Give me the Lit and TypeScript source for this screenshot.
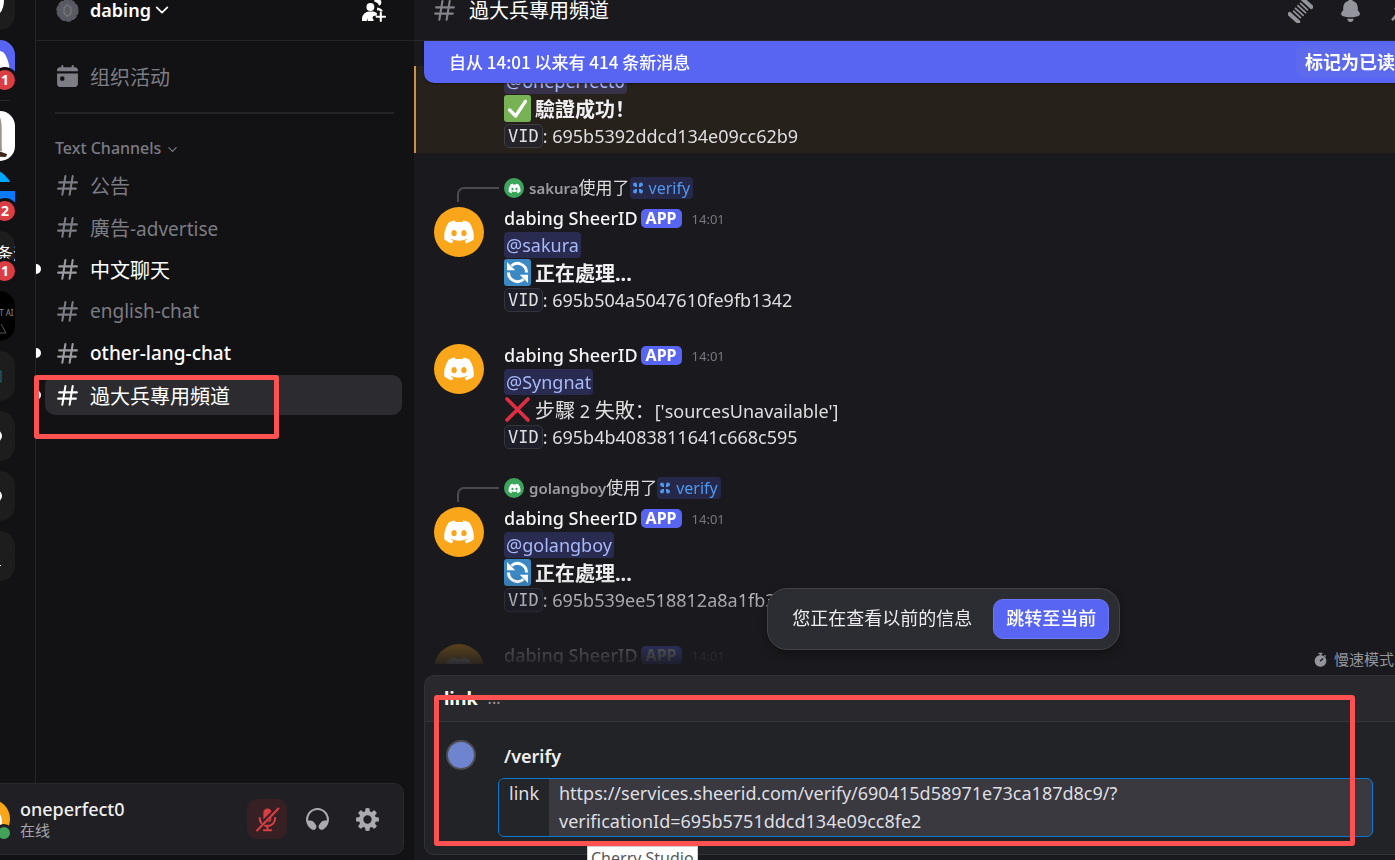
import { LitElement, html, svg, css, nothing, TemplateResult } from "lit";
import { customElement, property } from "lit/decorators.js";

const HASH =
  "M10.99 3.16A1 1 0 1 0 9 2.84L8.15 8H4a1 1 0 0 0 0 2h3.82l-.67 4H3a1 1 0 1 0 0 2h3.82l-.8 4.84a1 1 0 0 0 1.97.32L8.85 16h4.97l-.8 4.84a1 1 0 0 0 1.97.32l.86-5.16H20a1 1 0 1 0 0-2h-3.82l.67-4H21a1 1 0 1 0 0-2h-3.82l.8-4.84a1 1 0 1 0-1.97-.32L15.15 8h-4.97l.8-4.84ZM14.15 14l.67-4H9.85l-.67 4h4.97Z";
const CLYDE =
  "M19.73 4.87a18.2 18.2 0 0 0-4.6-1.44c-.21.4-.4.8-.58 1.21-1.69-.25-3.4-.25-5.1 0-.18-.41-.37-.82-.59-1.2-1.6.27-3.14.75-4.6 1.43A19.04 19.04 0 0 0 .96 17.7a18.43 18.43 0 0 0 5.63 2.87c.46-.62.86-1.28 1.2-1.98-.65-.25-1.29-.55-1.9-.92.17-.12.32-.24.47-.37 3.58 1.7 7.7 1.7 11.28 0l.46.37c-.6.36-1.25.67-1.9.92.35.7.75 1.35 1.2 1.98 2.03-.63 3.94-1.6 5.64-2.87.47-4.87-.78-9.09-3.3-12.83ZM8.3 15.12c-1.1 0-2-1.02-2-2.27 0-1.24.88-2.26 2-2.26s2.02 1.02 2 2.26c0 1.25-.89 2.27-2 2.27Zm7.4 0c-1.1 0-2-1.02-2-2.27 0-1.24.88-2.26 2-2.26s2.02 1.02 2 2.26c0 1.25-.88 2.27-2 2.27Z";
const GEAR =
  "M10.56 1.1c-.46.05-.7.53-.64.98.18 1.16-.19 2.2-.98 2.53-.8.33-1.79-.15-2.49-1.1-.27-.36-.78-.52-1.14-.24-.77.59-1.45 1.27-2.04 2.04-.28.36-.12.87.24 1.14.96.7 1.43 1.7 1.1 2.49-.33.8-1.37 1.16-2.53.98-.45-.07-.93.18-.99.64a11.1 11.1 0 0 0 0 2.88c.06.46.54.7.99.64 1.16-.18 2.2.19 2.53.98.33.8-.14 1.79-1.1 2.49-.36.27-.52.78-.24 1.14.59.77 1.27 1.45 2.04 2.04.36.28.87.12 1.14-.24.7-.95 1.7-1.43 2.49-1.1.8.33 1.16 1.37.98 2.53-.07.45.18.93.64.99a11.1 11.1 0 0 0 2.88 0c.46-.06.7-.54.64-.99-.18-1.16.19-2.2.98-2.53.8-.33 1.79.14 2.49 1.1.27.36.78.52 1.14.24.77-.59 1.45-1.27 2.04-2.04.28-.36.12-.87-.24-1.14-.96-.7-1.43-1.7-1.1-2.49.33-.8 1.37-1.16 2.53-.98.45.07.93-.18.99-.64a11.1 11.1 0 0 0 0-2.88c-.06-.46-.54-.7-.99-.64-1.16.18-2.2-.19-2.53-.98-.33-.8.14-1.79 1.1-2.49.36-.27.52-.78.24-1.14a11.07 11.07 0 0 0-2.04-2.04c-.36-.28-.87-.12-1.14.24-.7.96-1.7 1.43-2.49 1.1-.8-.33-1.16-1.37-.98-2.53.07-.45-.18-.93-.64-.99a11.1 11.1 0 0 0-2.88 0ZM16 12a4 4 0 1 1-8 0 4 4 0 0 1 8 0Z";
const BELL =
  "M9.7 2.89c.18-.07.32-.24.37-.43a2 2 0 0 1 3.86 0c.05.2.19.36.38.43A7 7 0 0 1 19 9.5v2.09c0 .12.05.24.13.33l1.1 1.22a3 3 0 0 1 .77 2.01v.28c0 .67-.34 1.29-.95 1.56-1.31.6-4 1.51-8.05 1.51-4.05 0-6.74-.91-8.05-1.5-.61-.28-.95-.9-.95-1.57v-.28a3 3 0 0 1 .77-2l1.1-1.23a.5.5 0 0 0 .13-.33V9.5a7 7 0 0 1 4.7-6.61ZM9.18 19.84A.16.16 0 0 0 9 20a3 3 0 1 0 6 0c0-.1-.09-.17-.18-.16a24.86 24.86 0 0 1-5.64 0Z";
const HEADPHONES =
  "M12 3a9 9 0 0 0-8.95 10h1.87a5 5 0 0 1 4.1 2.13l1.37 1.97a3.1 3.1 0 0 1-.17 3.78 2.85 2.85 0 0 1-3.55.74 11 11 0 1 1 10.66 0c-1.27.71-2.73.23-3.55-.74a3.1 3.1 0 0 1-.17-3.78l1.38-1.97a5 5 0 0 1 4.1-2.13h1.86A9 9 0 0 0 12 3Z";

const icon = (body: TemplateResult, cls = "ico") =>
  html`<svg class=${cls} viewBox="0 0 24 24" fill="currentColor" aria-hidden="true">${body}</svg>`;

const hash = () => icon(svg`<path fill-rule="evenodd" d=${HASH}></path>`);
const clyde = () => icon(svg`<path d=${CLYDE}></path>`, "clyde");
const gear = () => icon(svg`<path fill-rule="evenodd" d=${GEAR}></path>`);
const bell = () => icon(svg`<path d=${BELL}></path>`);
const headphones = () => icon(svg`<path d=${HEADPHONES}></path>`);
const chevron = () =>
  icon(svg`<path d="M4 8l8 8 8-8" fill="none" stroke="currentColor" stroke-width="2.6" stroke-linecap="round" stroke-linejoin="round"></path>`, "chevron");
const calendar = () =>
  icon(svg`<path d="M7 1a1 1 0 0 1 1 1v1h8V2a1 1 0 1 1 2 0v1h1a3 3 0 0 1 3 3v1H2V6a3 3 0 0 1 3-3h1V2a1 1 0 0 1 1-1Z"></path><path fill-rule="evenodd" d="M2 9h20v10a3 3 0 0 1-3 3H5a3 3 0 0 1-3-3V9Zm4 3a1 1 0 0 0-1 1v2a1 1 0 0 0 1 1h2a1 1 0 0 0 1-1v-2a1 1 0 0 0-1-1H6Z"></path>`);
const invite = () =>
  icon(svg`<circle cx="9" cy="8.600" r="3.800"></circle><path d="M1 22v-2.500A7 7 0 0 1 8 13h2.500c2 0 3.500.5 4.700 1.500V17H13a2 2 0 0 0-1 3.700V22H6.500l-.5-2.500-.5 2.500Z"></path><path d="M12.500 3.200a3.600 3.600 0 1 1 5 4.300 5.600 5.600 0 0 0-4-4Z"></path><path d="M15.500 9.200c2.800.3 4.800 1.600 5.500 3.600l-2.400.2-1.400-1.200-1.900.2Z"></path><path d="M19 14v8M15 18h8" stroke="currentColor" stroke-width="2" stroke-linecap="round"></path>`);
const scallop = () =>
  icon(svg`<circle cx="12" cy="12" r="9.300"></circle><circle cx="12" cy="12" r="9.400" fill="none" stroke="currentColor" stroke-width="2.600" stroke-dasharray="3.300 2.610" stroke-linecap="round"></circle><path d="M12 6.600l3.300 2.600v5.600L12 17.400l-3.300-2.600V9.200Z" fill="none" stroke="#77777f" stroke-width="1.200"></path>`);
const threads = () =>
  icon(svg`<g transform="rotate(-48 12 12)" stroke="currentColor" stroke-linecap="round" fill="none"><path d="M2.500 6.500v11" stroke-width="4"></path><path d="M21.500 6.500v11" stroke-width="4"></path><path d="M7 7.500v9M10.300 7v10M13.700 7v10M17 7.500v9" stroke-width="1.600"></path></g>`);
const pin = () => icon(svg`<path d="M3 20.500l6-7-3-3C7 8 10 7.500 12 8l4-6 7 7-6 4c.5 2 0 5-2.500 6l-3-3-7 6Z"></path>`);
const micOff = () =>
  icon(svg`<path d="M12 1.500a4 4 0 0 1 3.800 2.800L8 12.100V5.500a4 4 0 0 1 4-4Z"></path><path d="M4.500 10.500c0 2 .6 3.500 1.500 4.700M9.800 17.900c.7.200 1.400.3 2.200.300a7.200 7.200 0 0 0 7.300-7.700M12 18v4M8.500 22.300h7" stroke="currentColor" stroke-width="2" fill="none" stroke-linecap="round"></path><path d="M15.700 9.500v1.600a3.700 3.700 0 0 1-3.600 3.700Z"></path><path d="M2 22.500L22.500 1.500" stroke="currentColor" stroke-width="2" stroke-linecap="round"></path>`);
const stopwatch = () =>
  icon(svg`<path d="M9 1h6v2.500h-2V5a9.300 9.300 0 1 1-2 0V3.500H9ZM19 4.500l2 2-1.500 1.500-2-2Z"></path><path d="M12 14l3.500-3" stroke="#1a1a1e" stroke-width="2.200" stroke-linecap="round"></path>`, "small");
const appGlyph = () =>
  icon(svg`<circle cx="6" cy="5" r="4"></circle><circle cx="18" cy="5" r="4"></circle><circle cx="6" cy="19" r="4"></circle><circle cx="18" cy="19" r="4"></circle><path d="M6 5h4v5H6ZM14 5h4v5h-4ZM6 14h4v5H6ZM14 14h4v5h-4Z"></path>`, "glyph");

const emoji: Record<string, () => TemplateResult> = {
  ok: () => html`<svg class="emoji" viewBox="0 0 36 36" role="img" aria-label="✅"><rect width="36" height="36" rx="4" fill="#77b255"></rect><path d="M7.500 20l8 8L28.500 8.500" fill="none" stroke="#fff" stroke-width="4.500" stroke-linecap="round" stroke-linejoin="round"></path></svg>`,
  sync: () => html`<svg class="emoji" viewBox="0 0 36 36" role="img" aria-label="🔄"><rect width="36" height="36" rx="4" fill="#3b88c3"></rect><path d="M10 9A12 12 0 0 1 30 18M6 18a12 12 0 0 0 20 9" fill="none" stroke="#fff" stroke-width="4"></path><path d="M4 4v11h11ZM32 32V21H21Z" fill="#fff"></path></svg>`,
  fail: () => html`<svg class="emoji" viewBox="0 0 36 36" role="img" aria-label="❌"><path d="M4 4l28 28M32 4L4 32" stroke="#dd2e44" stroke-width="5" stroke-linecap="round"></path></svg>`,
};

interface Msg {
  mention: string;
  vid?: string;
  mark?: string;
  status?: TemplateResult;
  usedBy?: string;
  continued?: boolean;
}

const MESSAGES: Msg[] = [
  { continued: true, mention: "@oneperfect0", mark: "ok", status: html`<strong class="cjk">驗證成功！</strong>`, vid: "695b5392ddcd134e09cc62b9" },
  { usedBy: "sakura", mention: "@sakura", mark: "sync", status: html`<strong class="cjk">正在處理...</strong>`, vid: "695b504a5047610fe9fb1342" },
  { mention: "@Syngnat", mark: "fail", status: html`<span><span class="cjk">步驟</span> 2 <span class="cjk">失敗：</span>['sourcesUnavailable']</span>`, vid: "695b4b4083811641c668c595" },
  { usedBy: "golangboy", mention: "@golangboy", mark: "sync", status: html`<strong class="cjk">正在處理...</strong>`, vid: "695b539ee518812a8a1fb3c7" },
  { mention: "@oneperfect0" },
];

const shared = css`
  * { box-sizing: border-box; }
  ul, p, h1, h2, h3 { margin: 0; padding: 0; list-style: none; font-weight: 400; font-size: inherit; }
  button { font: inherit; color: inherit; background: none; border: 0; padding: 0; cursor: pointer; }
  a { color: inherit; text-decoration: none; }
  .ico { width: 25px; height: 25px; flex: none; display: block; }
  .chevron { width: 16px; height: 16px; flex: none; display: block; }
  .cjk { font-size: 20px; }
`;

@customElement("server-rail")
class ServerRail extends LitElement {
  static styles = [shared, css`
    :host { display: block; width: 36px; flex: none; border-right: 1px solid #242427; overflow: hidden; }
    .list { display: flex; flex-direction: column; gap: 10px; margin: -20px 0 0 -35px; width: 50px; }
    .server { display: block; position: relative; height: 50px; border-radius: 15px; background: #1d1d1e; color: #fff; }
    .art { display: block; width: 50px; height: 50px; border-radius: 15px; overflow: hidden; }
    .badge { position: absolute; right: 0; bottom: 0; width: 20px; height: 20px; border-radius: 10px; background: #da3e44; box-shadow: 0 0 0 3px #121214; font-size: 14px; line-height: 20px; font-weight: 700; text-align: center; }
    .rule { height: 1px; margin: 0 5px; background: #29292d; }
    .label { font-size: 17px; }
    .tiny { font-size: 8px; }
  `];

  private server(name: string, art: TemplateResult, badge?: number) {
    return html`<li><a class="server" href="#" aria-label=${name}>
      <svg class="art" viewBox="0 0 50 50" aria-hidden="true">${art}</svg>
      ${badge ? html`<span class="badge">${badge}</span>` : nothing}
    </a></li>`;
  }

  render() {
    return html`<ul class="list">
      ${this.server("Server 1", svg`<path d="M26 14h12c2 6 1 16-4 20h-8Z" fill="#fff"></path>`)}
      ${this.server("Direct messages", svg`<rect width="50" height="50" fill="#5865f2"></rect><path d="M10 46V16c6-5 24-8 29-3 4 5 6 14 6 22l-6 11Z" fill="#fff"></path>`, 1)}
      <li class="rule" role="separator"></li>
      ${this.server("Server 2", svg`<rect width="50" height="50" fill="#fff"></rect><path d="M24 6h11c3 8 1 20 2 34H24Z" fill="#9b958e"></path><path d="M24 38l10 2 8 3-1 3-17-1Z" fill="#3e281b"></path>`)}
      ${this.server("Server 3", svg`<rect width="50" height="50" fill="#121214"></rect><path d="M20 0h14c5 3 9 7 11 11H20Z" fill="#00a6ff"></path><path d="M20 20h30v14H20Z" fill="#0a78ff"></path>`, 2)}
      ${this.server("Server 4", svg`<text class="label" x="31" y="29" fill="#fff">条淡</text>`, 1)}
      ${this.server("Server 5", svg`<rect width="50" height="50" fill="#000"></rect><text class="tiny" x="30" y="25" fill="#8d8d92">FT AI</text><path d="M36 33l5 9H30" fill="none" stroke="#55555a"></path>`)}
      ${this.server("Server 6", svg`<path d="M31 20h5v11h-5Z" fill="none" stroke="#1f7480"></path>`)}
      ${this.server("Server 7", svg`<circle cx="31" cy="25" r="6" fill="#fff"></circle>`)}
      ${this.server("Server 8", svg`<circle cx="31" cy="25" r="6" fill="#fff"></circle>`)}
      ${this.server("Server 9", svg`<path d="M28 34h8v1h-8Z" fill="#fff"></path>`)}
    </ul>`;
  }
}

@customElement("channel-list")
class ChannelList extends LitElement {
  static styles = [shared, css`
    :host { display: flex; flex-direction: column; flex: 1; min-width: 0; }
    .head { display: flex; align-items: center; height: 41px; padding: 0 28px 20px 19px; border-bottom: 1px solid #242427; color: #fff; }
    .head .scallop { color: #5a5a63; display: flex; }
    .name { display: flex; align-items: center; gap: 3px; margin-left: 10px; font-size: 18px; font-weight: 600; line-height: 20px; }
    .invite { margin-left: auto; }
    .event { display: flex; align-items: center; gap: 10px; height: 40px; margin: 15px 12px 16px 9px; padding-left: 10px; color: #7d7d85; font-size: 20px; }
    .rule { height: 2px; margin: 0 20px 0 19px; background: #242427; }
    .section { display: flex; align-items: center; gap: 6px; margin: 24px 0 7px 19px; color: #7b7b83; font-size: 16px; font-weight: 500; line-height: 20px; }
    .section .chevron { width: 11px; height: 11px; margin-top: 3px; }
    .channels { display: flex; flex-direction: column; gap: 2px; }
    .row { display: flex; align-items: center; gap: 4px; padding-right: 12px; }
    .dot { width: 5px; height: 10px; border-radius: 0 5px 5px 0; flex: none; }
    .link { display: flex; align-items: center; gap: 10px; flex: 1; height: 40px; padding-left: 10px; border-radius: 10px; color: #7b7b83; font-size: 19px; white-space: nowrap; }
    .unread .dot { background: #fff; }
    .unread .link { color: #fff; font-weight: 500; }
    .unread .cjk { font-weight: 400; }
    .unread .ico { color: #9a9aa1; }
    .active .link { background: #2c2c30; }
    .active .ico { color: #fff; }
  `];

  private channels = [
    { name: html`<span class="cjk">公告</span>`, cls: "" },
    { name: html`<span><span class="cjk">廣告</span>-advertise</span>`, cls: "" },
    { name: html`<span class="cjk">中文聊天</span>`, cls: "unread" },
    { name: html`<span>english-chat</span>`, cls: "" },
    { name: html`<span>other-lang-chat</span>`, cls: "unread" },
    { name: html`<span class="cjk">過大兵專用頻道</span>`, cls: "unread active" },
  ];

  render() {
    return html`
      <header class="head">
        <span class="scallop">${scallop()}</span>
        <button class="name">dabing ${chevron()}</button>
        <button class="invite" aria-label="Invite">${invite()}</button>
      </header>
      <a class="event" href="#">${calendar()}<span>组织活动</span></a>
      <div class="rule"></div>
      <h2 class="section">Text Channels ${chevron()}</h2>
      <ul class="channels">
        ${this.channels.map((c) => html`<li class="row ${c.cls}"><span class="dot"></span><a class="link" href="#">${hash()}${c.name}</a></li>`)}
      </ul>`;
  }
}

@customElement("user-panel")
class UserPanel extends LitElement {
  static styles = [shared, css`
    :host { display: flex; align-items: center; gap: 10px; height: 72px; margin: 0 10px 5px 0; padding-right: 16px; border: 1px solid #29292d; border-left: 0; border-radius: 0 10px 10px 0; background: #202024; }
    .avatar { position: relative; width: 40px; height: 40px; margin-left: -30px; border-radius: 20px; background: #faa61a; color: #fff; display: flex; align-items: center; justify-content: center; }
    .clyde { width: 26px; height: 26px; }
    .status { position: absolute; right: 0; bottom: 0; width: 12px; height: 12px; border-radius: 6px; background: #43a25a; box-shadow: 0 0 0 3px #202024; }
    .who { flex: 1; min-width: 0; }
    .nick { font-size: 18px; font-weight: 500; line-height: 22px; color: #f0f0f2; }
    .state { font-size: 15px; line-height: 20px; color: #a5a5ab; }
    .btn { width: 40px; height: 40px; border-radius: 10px; display: flex; align-items: center; justify-content: center; color: #aaaab1; }
    .off { background: #362024; color: #da3e44; }
  `];

  render() {
    return html`
      <span class="avatar">${clyde()}<span class="status"></span></span>
      <div class="who"><p class="nick">oneperfect0</p><p class="state">在线</p></div>
      <button class="btn off" aria-label="Unmute">${micOff()}</button>
      <button class="btn" aria-label="Deafen">${headphones()}</button>
      <button class="btn" aria-label="Settings">${gear()}</button>`;
  }
}

@customElement("chat-message")
class ChatMessage extends LitElement {
  @property({ attribute: false }) msg!: Msg;

  static styles = [shared, css`
    :host { display: block; margin-bottom: 23px; padding: 1px 0 3px; font-size: 18px; color: #dfdfe2; white-space: nowrap; }
    :host([highlight]) { margin-bottom: 24px; background: #27211c; border-left: 2px solid #ca9149; }
    :host([highlight]) .body { padding-left: 88px; }
    :host([highlight]) .mention { background: #37314a; }
    .reply { display: flex; align-items: flex-start; gap: 5px; height: 20px; margin: 0 0 6px 43px; }
    .spine { width: 42px; height: 15px; margin-top: 9px; border: 2px solid #4b4b50; border-width: 2px 0 0 2px; border-radius: 7px 0 0 0; }
    .mini { width: 20px; height: 20px; border-radius: 10px; background: #3ba55c; color: #fff; display: flex; align-items: center; justify-content: center; }
    .mini .clyde { width: 13px; height: 13px; }
    .used { display: flex; align-items: center; height: 20px; }
    .by { font-size: 15px; font-weight: 600; color: #9b9ba1; }
    .verb { font-size: 17px; line-height: 20px; color: #dfdfe2; }
    .chip { display: flex; align-items: center; gap: 5px; height: 22px; padding: 0 3px 0 2px; border-radius: 4px; background: #252848; color: #5197ed; font-size: 16px; }
    .glyph { width: 12px; height: 12px; }
    .body { display: flex; gap: 20px; padding-left: 20px; }
    :host([highlight]) .body > .avatar { display: none; }
    .avatar { width: 50px; height: 50px; margin-top: 3px; flex: none; border-radius: 25px; background: #faa61a; color: #fff; display: flex; align-items: center; justify-content: center; }
    .avatar .clyde { width: 32px; height: 32px; }
    .head { display: flex; align-items: center; height: 27px; }
    .author { font-weight: 500; color: #f4f4f6; }
    .app { height: 19px; margin: 1px 10px 0 3px; padding: 0 5px; border-radius: 5px; background: #5865f2; color: #fff; font-size: 16px; line-height: 19px; font-weight: 700; }
    .time { margin-top: 3px; font-size: 13px; color: #77777f; }
    .line { display: flex; align-items: center; height: 28px; }
    .first { height: 27px; }
    .mention { height: 26px; line-height: 26px; padding: 0 2px; border-radius: 4px; background: #292c50; color: #a9b8f8; }
    .emoji { width: 27px; height: 27px; margin-right: 4px; flex: none; }
    .line strong { color: #f0f0f2; }
    .code { height: 24px; padding: 0 3px; border: 1px solid #34343c; border-radius: 5px; background: #1e1e2b; font: 17px/22px "DejaVu Sans Mono", monospace; }
    :host([highlight]) .code { background: #25232a; border-color: #403c40; }
  `];

  render() {
    const m = this.msg;
    return html`
      ${m.usedBy ? html`<div class="reply">
        <span class="spine"></span><span class="mini">${clyde()}</span>
        <span class="used"><span class="by">${m.usedBy}</span><span class="verb">使用了</span><a class="chip" href="#">${appGlyph()}verify</a></span>
      </div>` : nothing}
      <div class="body">
        <span class="avatar">${clyde()}</span>
        <div>
          ${m.continued ? nothing : html`<h3 class="head"><span class="author">dabing SheerID</span><span class="app">APP</span><time class="time">14:01</time></h3>`}
          <p class="line first"><span class="mention">${m.mention}</span></p>
          ${m.mark ? html`<p class="line">${emoji[m.mark]()}${m.status}</p>` : nothing}
          ${m.vid ? html`<p class="line"><code class="code">VID</code><span>: ${m.vid}</span></p>` : nothing}
        </div>
      </div>`;
  }
}

@customElement("command-composer")
class CommandComposer extends LitElement {
  static styles = [shared, css`
    :host { display: block; position: relative; margin-left: 10px; margin-bottom: 5px; border: 1px solid #323237; border-right: 0; border-radius: 10px 0 0 10px; background: #222327; color: #dfdfe2; font-size: 18px; }
    .hint { display: flex; align-items: center; gap: 10px; height: 46px; padding: 0 0 2px 19px; border-bottom: 1px solid #343439; border-radius: 9px 0 0 0; background: #29292d; }
    .hint strong { font-size: 18px; font-weight: 700; color: #fff; }
    .more { color: #9b9ba1; font-size: 16px; }
    .body { display: grid; grid-template-columns: 30px 1fr; column-gap: 22px; padding: 20px 22px 17px 21px; }
    .app { width: 30px; height: 30px; margin-top: -2px; border: 2px solid #4e4e55; border-radius: 15px; background: #6e84cf; }
    .command { line-height: 28px; padding-left: 6px; margin-bottom: 8px; font-size: 18px; font-weight: 600; color: #f0f0f2; }
    .field { display: flex; grid-column: 2; border: 1px solid #0a78d0; border-radius: 6px; overflow: hidden; background: #39393f; }
    .field label { width: 50px; padding-left: 10px; line-height: 28px; background: #242529; }
    .field textarea { flex: 1; display: block; min-width: 0; height: 57px; padding: 0 10px; border: 0; outline: 0; resize: none; overflow: hidden; background: none; color: inherit; font: inherit; line-height: 28px; }
    .tip { position: absolute; left: 162px; bottom: -16px; padding: 0 3px; background: #fff; border: 1px solid #d0d0d0; color: #575757; font-size: 16px; line-height: 22px; white-space: nowrap; }
  `];

  render() {
    return html`
      <div class="hint"><strong>link</strong><span class="more">...</span></div>
      <div class="body">
        <span class="app"></span>
        <h2 class="command">/verify</h2>
        <div class="field">
          <label for="link">link</label>
          <textarea id="link" rows="2" spellcheck="false" .value=${"https://services.sheerid.com/verify/690415d58971e73ca187d8c9/?verificationId=695b5751ddcd134e09cc8fe2"}></textarea>
        </div>
      </div>
      <span class="tip" role="tooltip">Cherry Studio</span>`;
  }
}

@customElement("app-root")
class AppRoot extends LitElement {
  static styles = [shared, css`
    :host { display: flex; position: relative; height: 100vh; overflow: hidden; background: #1a1a1e; color: #dfdfe2; font-family: "Noto Sans", "Noto Sans CJK SC", sans-serif; }
    .side { display: flex; flex-direction: column; width: 414px; flex: none; background: #121214; }
    .top { display: flex; flex: 1; min-height: 0; }
    .main { position: relative; display: flex; flex-direction: column; flex: 1; min-width: 0; overflow: hidden; }
    .head { display: flex; align-items: center; gap: 12px; height: 41px; flex: none; padding: 0 0 19px 18px; border-bottom: 1px solid #2a2a2e; color: #83838b; }
    .title { color: #fff; font-size: 20px; line-height: 20px; }
    .tools { display: flex; gap: 25px; margin: 0 -18px 0 auto; color: #94949c; }
    .feed { position: relative; flex: 1; min-height: 0; }
    .log { height: 100%; padding-top: 25px; overflow: hidden; mask-image: linear-gradient(to bottom, #000 calc(100% - 90px), rgba(0, 0, 0, .08) 100%); }
    .banner { position: absolute; top: 0; left: 10px; right: 0; display: flex; align-items: center; justify-content: space-between; height: 42px; padding: 0 0 2px 25px; border-radius: 0 0 0 10px; background: #5865f2; box-shadow: 0 1px 2px #0006; color: #fff; font-family: "Noto Sans CJK SC", sans-serif; font-size: 17px; font-weight: 500; }
    .read { height: 32px; padding-left: 9px; border-radius: 8px 0 0 8px; background: #5d6aec; font-size: 18px; font-weight: 700; white-space: nowrap; }
    .slow { display: flex; align-items: center; justify-content: flex-end; gap: 6px; height: 16px; margin: -13px 1px 8px; font-size: 15px; line-height: 16px; color: #94949c; }
    .small { width: 15px; height: 15px; }
    .jump { position: absolute; left: 36%; bottom: 210px; display: flex; align-items: center; gap: 21px; padding: 10px 10px 10px 24px; border: 1px solid #43444a; border-radius: 20px; background: #2c2d32; box-shadow: 0 4px 10px #0005; font-size: 18px; line-height: 22px; color: #ececee; white-space: nowrap; }
    .jump span { padding-bottom: 2px; }
    .go { height: 40px; padding: 0 12px 2px; border: 1px solid #6b77f4; border-radius: 10px; background: #5865f2; color: #fff; font-weight: 500; }
    .mark { position: absolute; border: 5px solid #fd5152; border-radius: 3px; pointer-events: none; }
    .mark-channel { left: 34px; top: 375px; width: 245px; height: 64px; }
    .mark-command { left: 434px; right: 40px; bottom: 14px; height: 151px; }
  `];

  render() {
    return html`
      <aside class="side">
        <div class="top"><server-rail></server-rail><channel-list></channel-list></div>
        <user-panel></user-panel>
      </aside>
      <main class="main">
        <header class="head">
          ${hash()}<h1 class="title">過大兵專用頻道</h1>
          <div class="tools">
            <button aria-label="Threads">${threads()}</button>
            <button aria-label="Notifications">${bell()}</button>
            <button aria-label="Pinned">${pin()}</button>
          </div>
        </header>
        <section class="feed">
          <div class="log">
            ${MESSAGES.map((m) => html`<chat-message .msg=${m} ?highlight=${!!m.continued}></chat-message>`)}
          </div>
          <div class="banner"><span>自从 14:01 以来有 414 条新消息</span><button class="read">标记为已读</button></div>
        </section>
        <div class="slow">${stopwatch()}<span>慢速模式</span></div>
        <command-composer></command-composer>
        <div class="jump"><span>您正在查看以前的信息</span><button class="go">跳转至当前</button></div>
      </main>
      <div class="mark mark-channel"></div>
      <div class="mark mark-command"></div>`;
  }
}
